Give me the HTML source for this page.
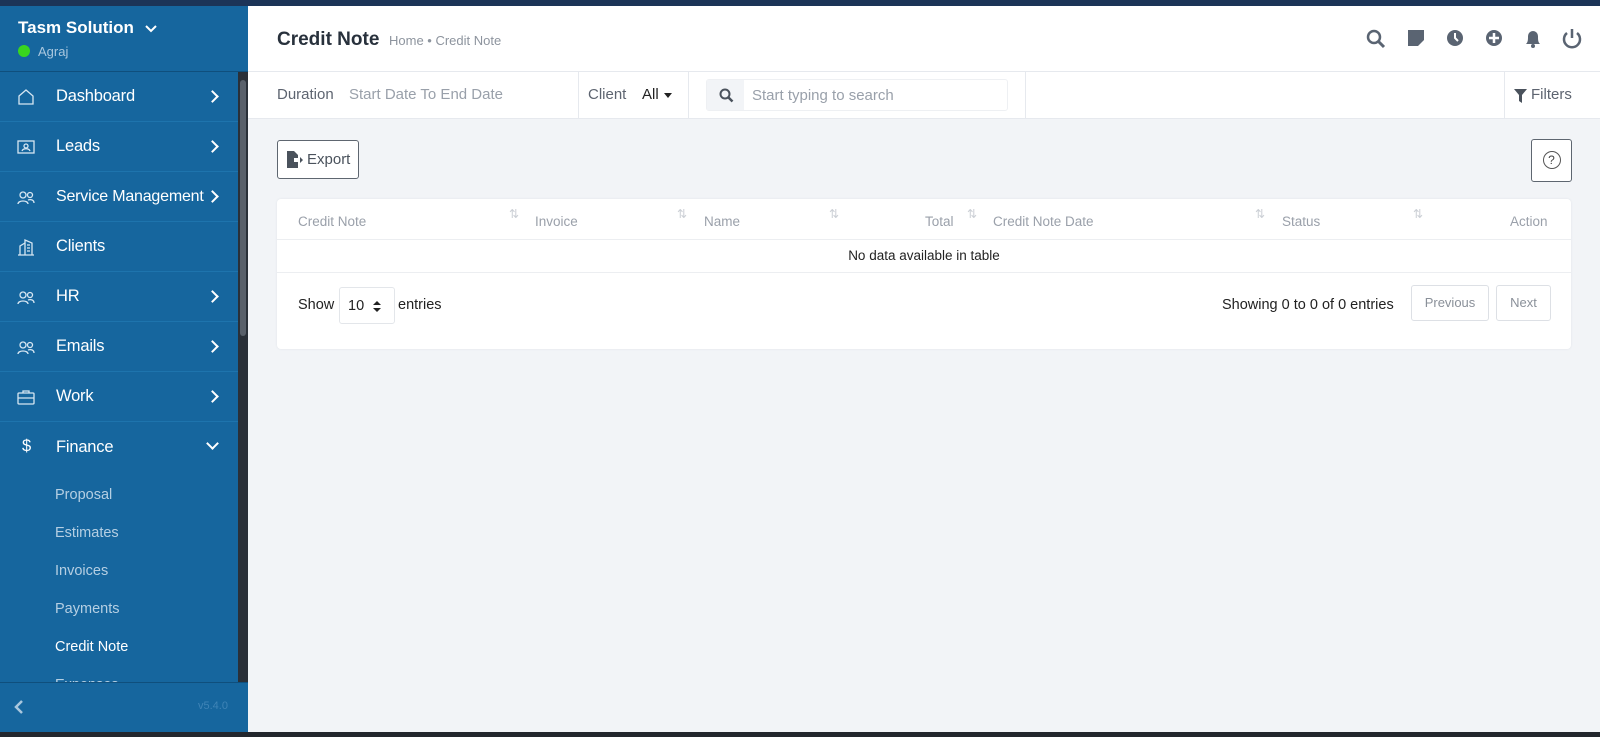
<!DOCTYPE html>
<html><head><meta charset="utf-8"><style>
*{box-sizing:border-box;margin:0;padding:0}
body{width:1600px;height:737px;overflow:hidden;background:#f2f4f7;font-family:"Liberation Sans",sans-serif;position:relative}
.top{position:absolute;left:0;top:0;width:1600px;height:6px;background:#1c3457}
.bot{position:absolute;left:0;top:732px;width:1600px;height:5px;background:#23272d}
.side{position:absolute;left:0;top:6px;width:248px;height:726px;background:#16669e;color:#fff}
.sh{height:66px;border-bottom:1px solid #0f4f7d;padding:12px 0 0 18px}
.sh b{font-size:17px;font-weight:bold;display:block}
.sh span{font-size:13px;color:#a9c7de;display:block;margin-top:6px}
.dot{display:inline-block;width:12px;height:12px;border-radius:50%;background:#39d61f;vertical-align:-1px;margin-right:8px}
.mi{height:50px;border-bottom:1px solid #1e74ad;display:flex;align-items:center;font-size:16.5px;padding-left:56px;position:relative;letter-spacing:-0.2px}
.mi svg{position:absolute;left:17px;top:16px}
.mi .ar{position:absolute;left:208px;top:20px;width:9px;height:9px;border-right:2px solid #fff;border-top:2px solid #fff;transform:rotate(45deg)}
.sub{font-size:14.5px;color:#b5cfe3;padding-left:55px;height:38px;line-height:38px}
.scroll{position:absolute;left:238px;top:66px;width:10px;height:610px;background:#2a3038}
.scroll i{position:absolute;left:2px;top:8px;width:6px;height:256px;background:#59606a;border-radius:3px}
.foot{position:absolute;left:0;top:676px;width:248px;height:50px;background:#16669e;border-top:1px solid #0f4f7d}
.hdr{position:absolute;left:248px;top:6px;width:1352px;height:66px;background:#fff;border-bottom:1px solid #e6e9ee}
.fb{position:absolute;left:248px;top:72px;width:1352px;height:47px;background:#fff;border-bottom:1px solid #e6e9ee;font-size:15px;color:#5d6470}
.g{color:#99a0aa}
.btn{position:absolute;background:#fff;border:1px solid #5e6670;border-radius:3px}
.card{position:absolute;left:277px;top:199px;width:1294px;height:150px;background:#fff;border-radius:4px;box-shadow:0 0 2px #e0e3e8}
.th{position:absolute;top:15px;font-size:13.5px;color:#9aa0aa}
.srt{position:absolute;top:8px;font-size:12px;color:#ccd0d6}
</style></head><body>
<div class="top"></div>
<div class="side">
 <div class="sh"><b>Tasm Solution <svg width="12" height="8" style="margin-left:6px" viewBox="0 0 12 8"><path d="M1 1l5 5 5-5" stroke="#fff" stroke-width="2" fill="none"/></svg></b><span><i class="dot"></i>Agraj</span></div>
 <div class="mi"><svg width="18" height="18" viewBox="0 0 18 18" fill="none" stroke="#d6e6f2" stroke-width="1.3"><path d="M2 8l7-6 7 6v8H2z"/></svg>Dashboard<i class="ar"></i></div>
 <div class="mi"><svg width="18" height="18" viewBox="0 0 18 18" fill="none" stroke="#d6e6f2" stroke-width="1.3"><rect x="1" y="3" width="16" height="12"/><circle cx="9" cy="8" r="2"/><path d="M5 13c1-3 7-3 8 0"/></svg>Leads<i class="ar"></i></div>
 <div class="mi" style="font-size:16px"><svg width="18" height="18" viewBox="0 0 18 18" fill="none" stroke="#d6e6f2" stroke-width="1.3"><circle cx="6" cy="7" r="3"/><circle cx="13" cy="7" r="2.5"/><path d="M1 16c0-4 10-4 10 0M11 12c3-1 6 0 6 3"/></svg>Service Management<i class="ar"></i></div>
 <div class="mi"><svg width="18" height="18" viewBox="0 0 18 18" fill="none" stroke="#d6e6f2" stroke-width="1.3"><path d="M1 17h16M3 17V8l5-3v12M8 17V2l7 3v12M10 7h3M10 10h3M10 13h3"/></svg>Clients</div>
 <div class="mi"><svg width="18" height="18" viewBox="0 0 18 18" fill="none" stroke="#d6e6f2" stroke-width="1.3"><circle cx="6" cy="7" r="3"/><circle cx="13" cy="7" r="2.5"/><path d="M1 16c0-4 10-4 10 0M11 12c3-1 6 0 6 3"/></svg>HR<i class="ar"></i></div>
 <div class="mi"><svg width="18" height="18" viewBox="0 0 18 18" fill="none" stroke="#d6e6f2" stroke-width="1.3"><circle cx="6" cy="7" r="3"/><circle cx="13" cy="7" r="2.5"/><path d="M1 16c0-4 10-4 10 0M11 12c3-1 6 0 6 3"/></svg>Emails<i class="ar"></i></div>
 <div class="mi"><svg width="18" height="18" viewBox="0 0 18 18" fill="none" stroke="#d6e6f2" stroke-width="1.3"><rect x="1" y="5" width="16" height="11" rx="1"/><path d="M6 5V3h6v2M1 10h16"/></svg>Work<i class="ar"></i></div>
 <div class="mi" style="border:none"><span style="position:absolute;left:22px;top:15px">$</span>Finance<i class="ar" style="transform:rotate(135deg);top:17px"></i></div>
 <div style="height:4px"></div>
 <div class="sub">Proposal</div><div class="sub">Estimates</div><div class="sub">Invoices</div><div class="sub">Payments</div>
 <div class="sub" style="color:#fff">Credit Note</div><div class="sub">Expenses</div>
 <div class="scroll"><i></i></div>
 <div class="foot"><svg style="position:absolute;left:14px;top:17px" width="10" height="14" viewBox="0 0 10 14"><path d="M8 1L2 7l6 6" stroke="#a9c7de" stroke-width="2.5" fill="none"/></svg><span style="position:absolute;left:198px;top:17px;font-size:11px;color:#3f84b6">v5.4.0</span></div>
</div>
<div class="hdr">
 <span style="position:absolute;left:29px;top:23px;font-size:19px;font-weight:bold;color:#28313c">Credit Note</span>
 <span style="position:absolute;left:141px;top:27px;font-size:13px;color:#8d949e">Home &bull; Credit Note</span>
 <svg style="position:absolute;left:1118px;top:22px" width="240" height="22" viewBox="0 0 240 22" fill="#5a6472">
  <circle cx="8" cy="9" r="6" fill="none" stroke="#5a6472" stroke-width="2.5"/><path d="M12 13l6 6" stroke="#5a6472" stroke-width="3"/>
  <path d="M42 2h16v10l-6 6h-10z"/>
  <circle cx="89" cy="10" r="8"/><path d="M89 5v5l3 3" stroke="#fff" stroke-width="2" fill="none"/>
  <circle cx="128" cy="10" r="8"/><path d="M128 5v10M123 10h10" stroke="#fff" stroke-width="2.5"/>
  <path d="M160 16c2-2 2-4 2-8a5 5 0 0110 0c0 4 0 6 2 8z"/><circle cx="167" cy="18" r="2"/>
  <path d="M201 5a8 8 0 1010 0" fill="none" stroke="#5a6472" stroke-width="2.5"/><path d="M206 1v9" stroke="#5a6472" stroke-width="2.5"/>
 </svg>
</div>
<div class="fb">
 <span style="position:absolute;left:29px;top:14px">Duration</span>
 <span class="g" style="position:absolute;left:101px;top:14px">Start Date To End Date</span>
 <div style="position:absolute;left:330px;top:0;width:1px;height:47px;background:#e6e9ee"></div>
 <span style="position:absolute;left:340px;top:14px">Client</span>
 <span style="position:absolute;left:394px;top:14px;color:#222">All</span>
 <svg style="position:absolute;left:416px;top:21px" width="8" height="5" viewBox="0 0 8 5"><path d="M0 0h8L4 5z" fill="#222"/></svg>
 <div style="position:absolute;left:440px;top:0;width:1px;height:47px;background:#e6e9ee"></div>
 <div style="position:absolute;left:458px;top:7px;width:302px;height:32px;border:1px solid #eef0f3;border-radius:3px"><div style="width:37px;height:30px;background:#f2f4f7;position:absolute;left:0;top:0"><svg style="position:absolute;left:12px;top:8px" width="15" height="15" viewBox="0 0 15 15"><circle cx="6" cy="6" r="4.5" fill="none" stroke="#4a525c" stroke-width="2"/><path d="M9.5 9.5l4 4" stroke="#4a525c" stroke-width="2.5"/></svg></div><span class="g" style="position:absolute;left:45px;top:7px">Start typing to search</span></div>
 <div style="position:absolute;left:777px;top:0;width:1px;height:47px;background:#e6e9ee"></div>
 <div style="position:absolute;left:1256px;top:0;width:1px;height:47px;background:#e6e9ee"></div>
 <svg style="position:absolute;left:1266px;top:17px" width="13" height="14" viewBox="0 0 13 14"><path d="M0 0h13L8 6v8l-3-2V6z" fill="#4a525c"/></svg>
 <span style="position:absolute;left:1283px;top:14px">Filters</span>
</div>
<div class="btn" style="left:277px;top:140px;width:82px;height:39px;font-size:15px;color:#4a525c">
 <svg style="position:absolute;left:9px;top:10px" width="16" height="17" viewBox="0 0 16 17"><path d="M0 0h7l4 4v3H7v4h4v6H0z" fill="#4a525c"/><path d="M8 9h5V6l3 3-3 3v-3" fill="#4a525c"/></svg>
 <span style="position:absolute;left:29px;top:10px">Export</span></div>
<div class="btn" style="left:1531px;top:139px;width:41px;height:43px"><div style="margin:11px auto;width:18px;height:18px;border:1.5px solid #555;border-radius:50%;font-size:12px;text-align:center;line-height:16px;color:#444">?</div></div>
<div class="card">
 <span class="th" style="left:21px">Credit Note</span><span class="srt" style="left:232px">&#8645;</span>
 <span class="th" style="left:258px">Invoice</span><span class="srt" style="left:400px">&#8645;</span>
 <span class="th" style="left:427px">Name</span><span class="srt" style="left:552px">&#8645;</span>
 <span class="th" style="left:648px">Total</span><span class="srt" style="left:690px">&#8645;</span>
 <span class="th" style="left:716px">Credit Note Date</span><span class="srt" style="left:978px">&#8645;</span>
 <span class="th" style="left:1005px">Status</span><span class="srt" style="left:1136px">&#8645;</span>
 <span class="th" style="left:1233px">Action</span>
 <div style="position:absolute;left:0;top:40px;width:100%;height:34px;border-top:1px solid #eceef1;border-bottom:1px solid #eceef1;text-align:center;font-size:13.5px;color:#222;line-height:32px">No data available in table</div>
 <span style="position:absolute;left:21px;top:98px;font-size:14.5px;color:#222">Show</span>
 <div style="position:absolute;left:62px;top:88px;width:56px;height:37px;border:1px solid #e3e6ea;border-radius:3px;font-size:14.5px;padding:10px 0 0 8px;color:#222">10<svg style="position:absolute;left:33px;top:13px" width="8" height="11" viewBox="0 0 8 11"><path d="M0 4l4-4 4 4zM0 7l4 4 4-4z" fill="#222"/></svg></div>
 <span style="position:absolute;left:121px;top:98px;font-size:14.5px;color:#222">entries</span>
 <span style="position:absolute;left:945px;top:98px;font-size:14.5px;color:#222">Showing 0 to 0 of 0 entries</span>
 <div style="position:absolute;left:1134px;top:86px;width:78px;height:36px;border:1px solid #dde0e5;border-radius:3px;font-size:13px;color:#8a9099;text-align:center;line-height:34px">Previous</div>
 <div style="position:absolute;left:1219px;top:86px;width:55px;height:36px;border:1px solid #dde0e5;border-radius:3px;font-size:13px;color:#8a9099;text-align:center;line-height:34px">Next</div>
</div>
<div class="bot"></div>
</body></html>
